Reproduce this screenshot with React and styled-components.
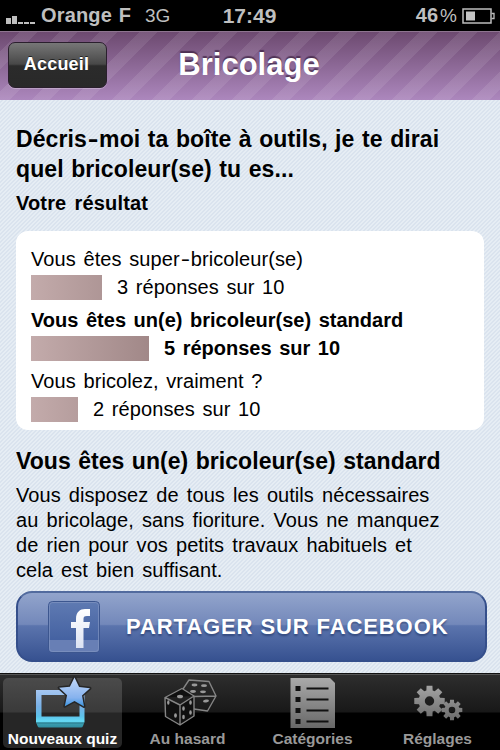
import React from "react";
import styled, { createGlobalStyle } from "styled-components";

const results = [
    { label: ['Vous êtes super', 'bricoleur(se)'], score: 3, width: 71 },
    { label: ['Vous êtes un(e) bricoleur(se) standard'], score: 5, width: 118, best: true },
    { label: ['Vous bricolez, vraiment ?'], score: 2, width: 47 }
];

const description = [
    'Vous disposez de tous les outils nécessaires',
    'au bricolage, sans fioriture. Vous ne manquez',
    'de rien pour vos petits travaux habituels et',
    'cela est bien suffisant.'
];

const tabs = [
    { name: 'Nouveaux quiz', icon: QuizIcon, active: true },
    { name: 'Au hasard', icon: DiceIcon },
    { name: 'Catégories', icon: ListIcon },
    { name: 'Réglages', icon: GearsIcon }
];

const gearPath = (cx, cy, outer, inner, hole) => {
    const points = [];

    for (let i = 0; i < 8; i++) {
        const base = i * Math.PI / 4;
        [[-.29, inner], [-.19, outer], [.19, outer], [.29, inner]].forEach(([offset, r]) => {
            points.push(`${(cx + r * Math.sin(base + offset)).toFixed(2)} ${(cy - r * Math.cos(base + offset)).toFixed(2)}`);
        });
    }

    return `M${points.join('L')}ZM${cx - hole} ${cy}a${hole} ${hole} 0 1 0 ${hole * 2} 0a${hole} ${hole} 0 1 0 ${-hole * 2} 0Z`;
};

function QuizIcon() {
    return (
        <svg width="64" height="54" viewBox="0 0 64 54">
            <defs>
                <linearGradient id="quiz" gradientUnits="userSpaceOnUse" x1="0" y1="14" x2="0" y2="53">
                    <stop offset="0" stopColor="#a9c8f2"/>
                    <stop offset=".45" stopColor="#78b0e6"/>
                    <stop offset=".7" stopColor="#5cc2ea"/>
                    <stop offset=".83" stopColor="#66dcf6"/>
                    <stop offset=".88" stopColor="#3a9fb2"/>
                    <stop offset="1" stopColor="#2f8b9d"/>
                </linearGradient>
                <linearGradient id="star" x1="0" y1="0" x2="0" y2="1">
                    <stop offset="0" stopColor="#c3d8f8"/>
                    <stop offset=".7" stopColor="#86b2ee"/>
                    <stop offset="1" stopColor="#3a95e0"/>
                </linearGradient>
            </defs>
            <path fill="url(#quiz)" fillRule="evenodd" d="M5 15h48.500v32l-1.500 4q-.5 1.500-2 1.500H8.500q-1.500 0-2-1.500L5 47ZM10.500 20v21.500H48.500V20Z"/>
            <path d="M5.500 48h47.500" stroke="#2b7688" strokeWidth="1"/>
            <path fill="url(#star)" stroke="#262626" strokeWidth="3" paintOrder="stroke" strokeLinejoin="round"
                  d="M43.500 2.500l4.600 9.500 10.900 1.300-8 7.200 2 11-9.500-5.500-9.700 5.200 2.300-11-8-7.400 10.800-1Z"/>
        </svg>
    );
}

function DiceIcon() {
    return (
        <svg width="64" height="54" viewBox="0 -1 64 54" fill="none" stroke="#858585" strokeWidth="1.400" strokeLinejoin="round">
            <path d="M27 13L33 4L53 5.500L60 20L51.500 35L38 33M38 20.500L60 20"/>
            <path fill="#101010" d="M9 21.500L26 12.500L38 20V40L24 49L9.500 40.500ZM9 21.500L24 29L38 20M24 29V49"/>
            <g fill="#999" stroke="none">
                <ellipse cx="24" cy="20.500" rx="3" ry="1.800"/>
                <ellipse cx="12.300" cy="26.500" rx="1.200" ry="2.200"/>
                <ellipse cx="19.500" cy="39.500" rx="1.400" ry="2.300"/>
                <ellipse cx="27.500" cy="32.500" rx="1.300" ry="2.200"/>
                <ellipse cx="34.500" cy="26.500" rx="1.300" ry="2.200"/>
                <ellipse cx="27.500" cy="41" rx="1.300" ry="2.200"/>
                <ellipse cx="34.500" cy="36.500" rx="1.300" ry="2.200"/>
                <ellipse cx="38.500" cy="9" rx="3" ry="1.400"/>
                <ellipse cx="48" cy="9.700" rx="3" ry="1.400"/>
                <ellipse cx="37" cy="15.500" rx="3" ry="1.400"/>
                <ellipse cx="47" cy="15.800" rx="3" ry="1.400"/>
                <ellipse cx="50" cy="25" rx="3" ry="1.500" transform="rotate(-10 50 25)"/>
            </g>
        </svg>
    );
}

function ListIcon() {
    return (
        <svg width="64" height="54" viewBox="0 0 64 54">
            <defs>
                <linearGradient id="sheet" x1="0" y1="0" x2="0" y2="1">
                    <stop offset="0" stopColor="#aaa"/>
                    <stop offset="1" stopColor="#686868"/>
                </linearGradient>
            </defs>
            <path fill="url(#sheet)" d="M9.500 3h39.500l5 5v45H9.500Z"/>
            { [11, 22, 33, 44].map(y =>
                <g key={y} fill="#111">
                    <rect x="14.500" y={y} width="5" height="5"/>
                    <rect x="25.500" y={y + 1.500} width="22" height="2"/>
                </g>
            )}
        </svg>
    );
}

function GearsIcon() {
    return (
        <svg width="64" height="54" viewBox="0 0 64 54">
            <defs>
                <linearGradient id="gears" gradientUnits="userSpaceOnUse" x1="0" y1="10" x2="0" y2="45">
                    <stop offset="0" stopColor="#a5a5a5"/>
                    <stop offset="1" stopColor="#6c6c6c"/>
                </linearGradient>
            </defs>
            <g fill="url(#gears)" fillRule="evenodd">
                <path d={ gearPath(23.5, 26, 15.5, 11, 4.7) }/>
                <path d={ gearPath(46, 35, 10.500, 7.500, 3.300) }/>
            </g>
        </svg>
    );
}

const App = () => (
    <Screen>
        <GlobalStyle/>

        <StatusBar>
            <Carrier>
                <Signal>
                    { [6, 8, 2, 2, 2].map((height, index) => <SignalBar key={index} height={ height }/>) }
                </Signal>
                <CarrierName>Orange F</CarrierName>
                <Network>3G</Network>
            </Carrier>
            <Clock>17:49</Clock>
            <Power>
                46<Percent>%</Percent>
                <svg width="33" height="16" viewBox="0 0 33 16">
                    <rect x="1" y="1" width="28" height="14" fill="none" stroke="#bdbdbd" strokeWidth="1.500"/>
                    <rect x="4" y="3.500" width="9" height="9" fill="#c4c4c4"/>
                    <path d="M29.500 5.500h2.500v5h-2.500" fill="none" stroke="#bdbdbd" strokeWidth="1.300"/>
                </svg>
            </Power>
        </StatusBar>

        <Header>
            <BackButton>Accueil</BackButton>
            <Title>Bricolage</Title>
        </Header>

        <Content>
            <Question>
                Décris<Hyphen>-</Hyphen>moi ta boîte à outils, je te dirai<br/>
                quel bricoleur(se) tu es...
            </Question>
            <SubTitle>Votre résultat</SubTitle>

            <Card>
                { results.map((item, index) =>
                    <Result key={index} best={ item.best }>
                        <ResultLabel>
                            { item.label[0] }
                            { item.label[1] && <><Hyphen>-</Hyphen>{ item.label[1] }</> }
                        </ResultLabel>
                        <ResultRow>
                            <Bar style={{ width: item.width }}/>
                            { item.score } réponses sur 10
                        </ResultRow>
                    </Result>
                )}
            </Card>

            <Verdict>Vous êtes un(e) bricoleur(se) standard</Verdict>
            <Description>
                { description.map(line => <div key={line}>{ line }</div>) }
            </Description>

            <ShareButton>
                <svg width="52" height="52" viewBox="0 0 52 52">
                    <defs>
                        <linearGradient id="fb" x1="0" y1="0" x2="0" y2="1">
                            <stop offset="0" stopColor="#5f7ab2"/>
                            <stop offset="1" stopColor="#3c5a9c"/>
                        </linearGradient>
                        <linearGradient id="letter" x1="0" y1="0" x2="0" y2="1">
                            <stop offset="0" stopColor="#fff"/>
                            <stop offset="1" stopColor="#dce3f3"/>
                        </linearGradient>
                    </defs>
                    <rect x=".5" y=".5" width="51" height="51" rx="4" fill="url(#fb)" stroke="#3c568f"/>
                    <path d="M1 39h50v9q0 3-3 3H4q-3 0-3-3Z" fill="#687fb5"/>
                    <rect x="1.500" y="1.500" width="49" height="49" rx="3" fill="none" stroke="#8094c1" strokeOpacity=".7"/>
                    <path fill="url(#letter)" d="M28 47V27h-5v-6h5v-3c0-7 4-10 9-10h5v7h-3c-3 0-3.500 1-3.500 3v3h6.500l-1 6h-5.500v20Z"/>
                </svg>
                <ShareText>PARTAGER SUR FACEBOOK</ShareText>
            </ShareButton>
        </Content>

        <TabBar>
            { tabs.map(({ name, icon: Icon, active }) =>
                <Tab key={name} active={ active }>
                    <Icon/>
                    <TabName>{ name }</TabName>
                </Tab>
            )}
        </TabBar>
    </Screen>
);

const GlobalStyle = createGlobalStyle`
  * {
    box-sizing: border-box;
  }

  body {
    margin: 0;
    overflow: hidden;
    font-family: "Liberation Sans", Arial, sans-serif;
  }
`;

const Screen = styled.div`
  width: 500px;
  height: 750px;
  display: flex;
  flex-direction: column;
  white-space: nowrap;
`;

const StatusBar = styled.div`
  height: 31px;
  flex: none;
  display: grid;
  grid-template-columns: 1fr auto 1fr;
  align-items: center;
  padding: 0 5px 0 6px;
  background: #000;
  color: #bfbfbf;
  font-size: 20px;
  font-weight: bold;
`;

const Carrier = styled.div`
  display: flex;
  align-items: center;
`;

const Signal = styled.div`
  display: flex;
  align-items: flex-end;
  gap: 1px;
  height: 16px;
  width: 35px;
`;

const SignalBar = styled.div`
  width: 5px;
  flex: none;
  height: ${ props => props.height }px;
  background: #bfbfbf;
`;

const CarrierName = styled.span`
  letter-spacing: .15px;
  word-spacing: 1px;
`;

const Network = styled.span`
  margin-left: 14px;
  font-size: 19px;
  font-weight: normal;
`;

const Clock = styled.span`
  margin-right: 2px;
  font-size: 21px;
`;

const Power = styled.div`
  display: flex;
  align-items: center;
  justify-content: flex-end;
`;

const Percent = styled.span`
  margin: 0 5px 0 2px;
  font-size: 19px;
  font-weight: normal;
`;

const Header = styled.div`
  height: 69px;
  flex: none;
  display: grid;
  grid-template-columns: 99px 1fr 101px;
  align-items: center;
  padding: 0 8px 2px;
  border-top: 1px solid #8e7590;
  background:
    repeating-linear-gradient(135deg, transparent 0 13.5px, rgba(255, 255, 255, .09) 13.5px 26.500px, transparent 26.500px 28.280px),
    linear-gradient(#6d4a70, #ac87bd);
`;

const BackButton = styled.button`
  height: 46px;
  margin: 0;
  padding: 0 2px 1px 0;
  border: 1px solid #2a1f2d;
  border-radius: 7px;
  background: linear-gradient(#777 0, #484848 48%, #2b2b2b 52%, #292929);
  box-shadow: 0 1px 0 rgba(255, 255, 255, .25);
  color: #fff;
  font: bold 18px "Liberation Sans", Arial, sans-serif;
  letter-spacing: .2px;
  text-shadow: 0 -1px 0 rgba(0, 0, 0, .6);
`;

const Title = styled.h1`
  margin: 0;
  color: #fff;
  font-size: 31px;
  text-align: center;
  text-shadow: 0 -2px 1px rgba(50, 25, 55, .65);
`;

const Content = styled.div`
  flex: 1;
  min-height: 0;
  padding: 24px 13px 0 16px;
  background: repeating-linear-gradient(135deg, #e6edf4 0 1.414px, #dae3ee 1.414px 2.828px);
  color: #000;
`;

const Hyphen = styled.span`
  display: inline-block;
  padding: 0 2.200px;
  transform: scaleX(1.4);
`;

const Question = styled.h2`
  margin: 0;
  font-size: 23px;
  line-height: 30px;
  letter-spacing: .1px;
  word-spacing: 1px;
`;

const SubTitle = styled.h3`
  margin: 5px 0 0;
  font-size: 20px;
  line-height: 28px;
  letter-spacing: .15px;
  word-spacing: 2.500px;
`;

const Card = styled.div`
  width: 468px;
  height: 199px;
  margin-top: 14px;
  padding: 13px 15px 0;
  border-radius: 12px;
  background: #fff;
`;

const Result = styled.div`
  height: 61px;
  font-size: 20px;
  font-weight: ${ props => props.best ? 'bold' : 'normal' };
  letter-spacing: ${ props => props.best ? 0 : '.08px' };
  word-spacing: 2px;
`;

const ResultLabel = styled.div`
  height: 31px;
  line-height: 30px;
`;

const ResultRow = styled.div`
  display: flex;
  align-items: center;
  gap: 15px;
  height: 25px;
`;

const Bar = styled.div`
  height: 25px;
  background: linear-gradient(90deg, #c3abab, #a18888) 0 0 / 118px 100%;
`;

const Verdict = styled.h2`
  margin: 16px 0 0;
  font-size: 23px;
  line-height: 30px;
  letter-spacing: .05px;
  word-spacing: 1px;
`;

const Description = styled.div`
  margin-top: 7px;
  font-size: 20px;
  line-height: 25px;
  letter-spacing: .06px;
  word-spacing: 2.5px;
`;

const ShareButton = styled.button`
  display: flex;
  align-items: center;
  width: 471px;
  height: 71px;
  margin: 8px 0 0;
  padding: 0 0 0 30px;
  border: 2px solid #354f8b;
  border-top-color: #526b9e;
  border-radius: 16px;
  background: linear-gradient(#94a6cd 0, #7388ba 47%, #5b74ad 49%, #35508f) border-box;
`;

const ShareText = styled.span`
  margin-left: 26px;
  color: #fff;
  font: bold 22px "Liberation Sans", Arial, sans-serif;
  letter-spacing: .9px;
  text-shadow: 0 2px 2px rgba(30, 50, 100, .6);
`;

const TabBar = styled.div`
  height: 77px;
  flex: none;
  display: grid;
  grid-template-columns: repeat(4, 1fr);
  padding-top: 3px;
  border-top: 1px solid #111;
  box-shadow: inset 0 1px 0 #555;
  background: linear-gradient(#2e2e2e, #181818 38px, #000 39px);
`;

const Tab = styled.div`
  display: flex;
  flex-direction: column;
  align-items: center;
  height: 70px;
  margin: 1px 3px 0;
  border-radius: 5px;
  background: ${ props => props.active ? 'rgba(255, 255, 255, .15)' : 'none' };
  color: ${ props => props.active ? '#fff' : '#999' };

  svg {
    flex: none;
    margin: -3px 0 1px;
  }
`;

const TabName = styled.span`
  font-size: 15.500px;
  font-weight: bold;
  line-height: 18px;
`;

export default App;
